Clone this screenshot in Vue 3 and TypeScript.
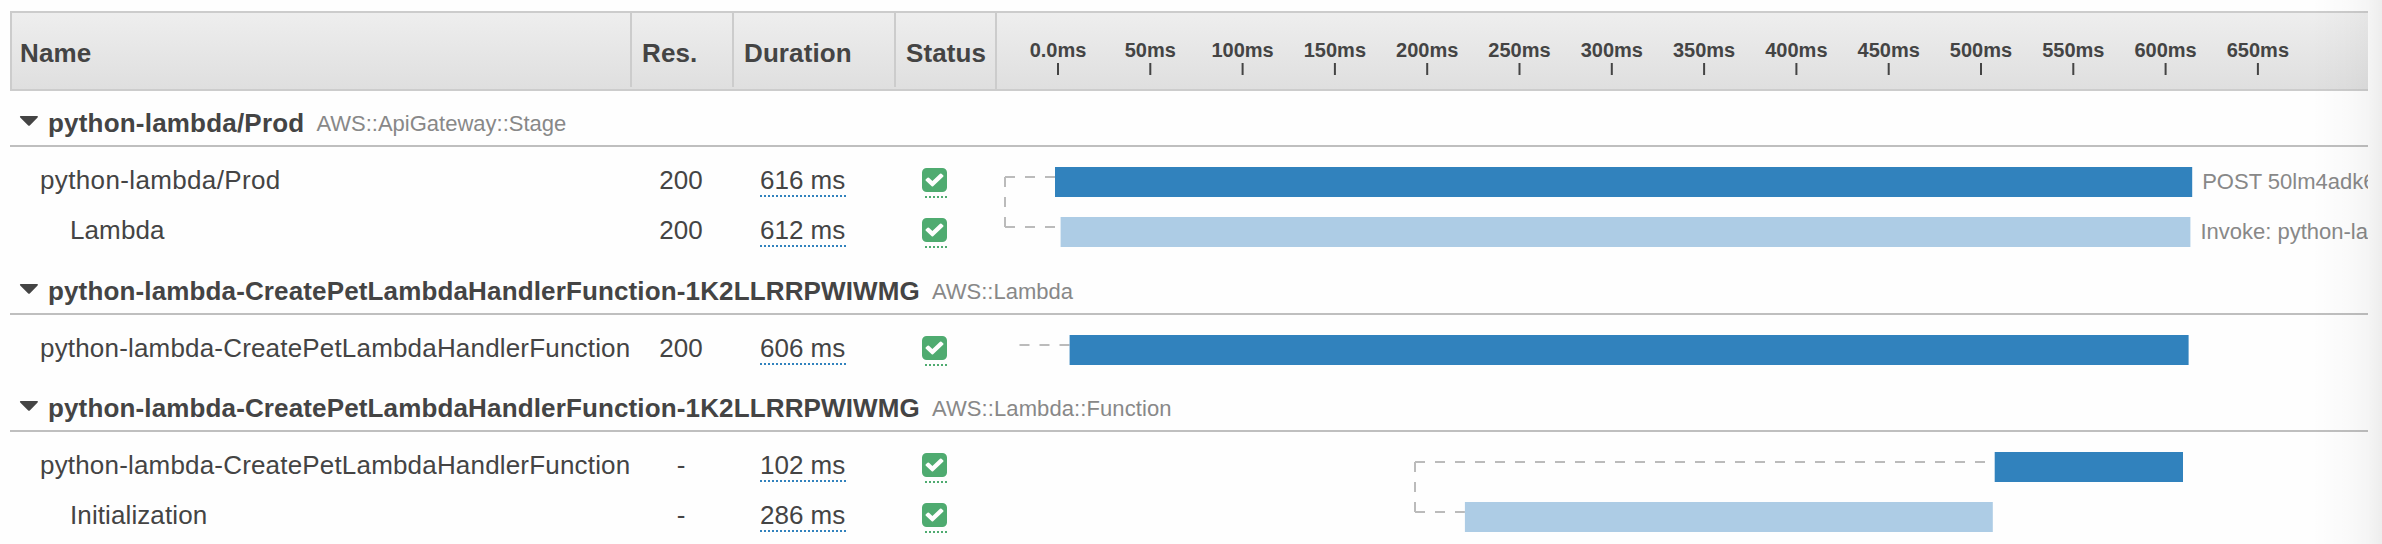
<script setup lang="ts">
interface Segment {
  name: string
  child?: boolean
  res: string
  duration: string
  start: number
  end: number
  label?: string
}

interface Group {
  name: string
  type: string
  origin: string
  heading: string
  connectorX: number
  segments: Segment[]
}

const ROW = 50
const BAR_TOP = 10
const BAR_HEIGHT = 30
const ORIGIN = 61
const TICK_STEP = 92.3

const ticks = Array.from({ length: 14 }, (_, i) => ({
  label: i === 0 ? '0.0ms' : `${i * 50}ms`,
  x: ORIGIN + i * TICK_STEP,
}))

const groups: Group[] = [
  {
    name: 'python-lambda/Prod',
    type: 'AWS::ApiGateway::Stage',
    origin: 'api',
    heading: 'h-first',
    connectorX: 8,
    segments: [
      { name: 'python-lambda/Prod', res: '200', duration: '616 ms', start: 58, end: 1195.2, label: 'POST 50lm4adk6' },
      { name: 'Lambda', child: true, res: '200', duration: '612 ms', start: 63.6, end: 1193.4, label: 'Invoke: python-la' },
    ],
  },
  {
    name: 'python-lambda-CreatePetLambdaHandlerFunction-1K2LLRRPWIWMG',
    type: 'AWS::Lambda',
    origin: 'lambda',
    heading: 'h-second',
    connectorX: 22.5,
    segments: [
      { name: 'python-lambda-CreatePetLambdaHandlerFunction', res: '200', duration: '606 ms', start: 72.6, end: 1191.6 },
    ],
  },
  {
    name: 'python-lambda-CreatePetLambdaHandlerFunction-1K2LLRRPWIWMG',
    type: 'AWS::Lambda::Function',
    origin: 'function',
    heading: 'h-third',
    connectorX: 418,
    segments: [
      { name: 'python-lambda-CreatePetLambdaHandlerFunction', res: '-', duration: '102 ms', start: 997.7, end: 1186 },
      { name: 'Initialization', child: true, res: '-', duration: '286 ms', start: 467.9, end: 995.8 },
    ],
  },
]

const barY = (i: number) => i * ROW + BAR_TOP
const lineY = (i: number) => barY(i) + 10
</script>

<template>
  <main class="page">
    <section class="trace">
      <header class="head grid">
        <div class="th"><span>Name</span></div>
        <div class="th"><span>Res.</span></div>
        <div class="th"><span>Duration</span></div>
        <div class="th last"><span>Status</span></div>
        <svg class="axis" width="1369" height="76">
          <g v-for="t in ticks" :key="t.label">
            <text class="tick-label" :x="t.x" y="44">{{ t.label }}</text>
            <rect class="tick" :x="t.x - 1" y="50" width="2" height="12" />
          </g>
        </svg>
      </header>

      <section v-for="g in groups" :key="g.origin" :class="g.origin">
        <h2 class="group" :class="g.heading">
          <svg class="caret" width="20" height="12" viewBox="0 0 20 12">
            <path d="M1.6 1H18.2Q19.6 1.2 18.6 2.4L10.8 10.4Q10 11.2 9.2 10.4L1.2 2.4Q.3 1.2 1.6 1Z" />
          </svg>
          <span class="group-name">{{ g.name }}</span>
          <span class="group-type">{{ g.type }}</span>
        </h2>
        <div class="body">
          <div class="rows">
            <div v-for="s in g.segments" :key="s.name" class="row">
              <div class="name" :class="{ child: s.child }">{{ s.name }}</div>
              <div class="res">{{ s.res }}</div>
              <div class="dur"><span>{{ s.duration }}</span></div>
              <div class="status">
                <svg class="check" width="25" height="24" viewBox="128 128 1536 1536" preserveAspectRatio="none">
                  <path d="M813 1299l614-614q19-19 19-45t-19-45l-102-102q-19-19-45-19t-45 19l-467 467-211-211q-19-19-45-19t-45 19l-102 102q-19 19-19 45t19 45l358 358q19 19 45 19t45-19zm851-883v960q0 119-84.5 203.5t-203.5 84.5h-960q-119 0-203.5-84.5t-84.5-203.5v-960q0-119 84.5-203.5t203.5-84.5h960q119 0 203.5 84.5t84.5 203.5z" />
                </svg>
                <i class="dots"></i>
              </div>
            </div>
          </div>
          <svg class="chart" width="1371" :height="g.segments.length * ROW">
            <line
              v-for="(s, i) in g.segments"
              :key="'l' + i"
              class="link"
              :x1="g.connectorX"
              :x2="s.start"
              :y1="lineY(i)"
              :y2="lineY(i)"
            />
            <line
              v-if="g.segments.length > 1"
              class="link"
              :x1="g.connectorX"
              :x2="g.connectorX"
              :y1="lineY(0)"
              :y2="lineY(g.segments.length - 1)"
            />
            <g v-for="(s, i) in g.segments" :key="'b' + i">
              <rect
                :class="s.child ? 'bar light' : 'bar'"
                :x="s.start"
                :y="barY(i)"
                :width="s.end - s.start"
                :height="BAR_HEIGHT"
              />
              <text v-if="s.label" class="bar-label" :x="s.end + 10" :y="barY(i) + 22">{{ s.label }}</text>
            </g>
          </svg>
        </div>
      </section>
    </section>
    <div class="edge"></div>
  </main>
</template>

<style>
body {
  background: #fefefe;
  overflow: hidden;
}
</style>

<style scoped>
.page {
  position: relative;
  width: 2382px;
  height: 544px;
  overflow: hidden;
  box-sizing: border-box;
  padding: 11px 0 0 10px;
  font-family: "Liberation Sans", Arial, sans-serif;
  font-size: 26px;
  color: #444;
}
.trace {
  width: 2358px;
  overflow: hidden;
}
.grid {
  display: grid;
  grid-template-columns: 620px 102px 162px 101px 1fr;
}
.head {
  height: 80px;
  box-sizing: border-box;
  border: 2px solid #ccc;
  border-right: 0;
  background: linear-gradient(#eee, #dfdfdf);
}
.th {
  height: 74px;
  box-sizing: border-box;
  border-right: 2px solid #ccc;
  padding: 0 0 0 10px;
  font-weight: 700;
  line-height: 81px;
  letter-spacing: 0.1px;
  white-space: nowrap;
}
.th:first-child {
  padding-left: 8px;
}
.th.last {
  height: 76px;
}
.axis {
  display: block;
}
.tick-label {
  font-size: 20px;
  font-weight: 700;
  fill: #444;
  text-anchor: middle;
}
.tick {
  fill: #444;
}
.group {
  margin: 0;
  box-sizing: border-box;
  border-bottom: 2px solid #bfbfbf;
  display: flex;
  align-items: flex-end;
  padding: 0 0 7px 9px;
  font-size: 26px;
  line-height: 30px;
  white-space: nowrap;
}
.h-first {
  height: 56px;
}
.h-second {
  height: 58px;
}
.h-third {
  height: 57px;
}
.caret {
  flex: none;
  margin: 0 9px 11px 0;
  fill: #444;
}
.group-name {
  letter-spacing: 0.14px;
}
.api .group-name {
  letter-spacing: 0.2px;
}
.group-type {
  margin-left: 12px;
  font-size: 22px;
  font-weight: 400;
  line-height: 28px;
  color: #888;
}
.function .group-type {
  letter-spacing: 0.1px;
}
.body {
  display: flex;
  padding-top: 10px;
}
.row {
  display: grid;
  grid-template-columns: 620px 102px 162px 103px;
  height: 50px;
  line-height: 47px;
  white-space: nowrap;
}
.name {
  padding-left: 30px;
  letter-spacing: 0.18px;
}
.api .name {
  letter-spacing: 0.36px;
}
.name.child {
  padding-left: 60px;
  letter-spacing: 0.1px;
}
.res {
  text-align: center;
}
.dur {
  padding-left: 28px;
}
.dur span {
  display: block;
  width: 86px;
  height: 40px;
  box-sizing: border-box;
  background: repeating-linear-gradient(90deg, #3182bd 0 2px, transparent 2px 4px) 0 38px / 100% 2px no-repeat;
}
.status {
  display: flex;
  flex-direction: column;
  padding: 11px 0 0 28px;
}
.check {
  fill: #4fab70;
}
.dots {
  width: 22px;
  height: 2px;
  margin: 4px 0 0 3px;
  background: repeating-linear-gradient(90deg, #4fab70 0 2px, transparent 2px 4px);
}
.chart {
  display: block;
  flex: none;
}
.link {
  stroke: #bbb;
  stroke-width: 2;
  stroke-dasharray: 10 10;
}
.bar {
  fill: #3182bd;
}
.bar.light {
  fill: #adcce5;
}
.bar-label {
  font-size: 22px;
  fill: #888;
}
.edge {
  position: absolute;
  top: 0;
  right: 0;
  width: 72px;
  height: 544px;
  background: linear-gradient(90deg, transparent, rgba(0, 0, 0, 0.015) 50%, rgba(0, 0, 0, 0.035) 80%, rgba(0, 0, 0, 0.065));
  pointer-events: none;
}
</style>
